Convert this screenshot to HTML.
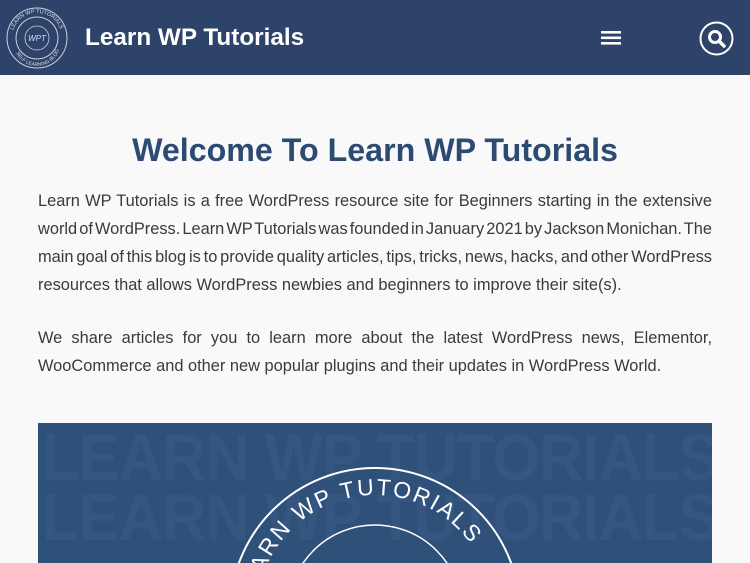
<!DOCTYPE html>
<html><head><meta charset="utf-8"><style>
*{margin:0;padding:0;box-sizing:border-box}
body{width:750px;height:563px;overflow:hidden;background:#f9f9f9;font-family:"Liberation Sans",sans-serif}
.hdr{position:absolute;left:0;top:0;width:750px;height:75px;background:#2e4369}
.title{position:absolute;left:85px;top:24px;color:#fff;font-size:24.3px;font-weight:bold}
h1{position:absolute;left:0;width:750px;top:132px;text-align:center;color:#2c4a72;font-size:32.2px;font-weight:bold}
.p{position:absolute;left:38px;width:674px;color:#3a3a3a;font-size:16.4px;line-height:28px}
.p div{text-align:justify;text-align-last:justify;white-space:nowrap}
.p div.l{text-align-last:left}
.img{position:absolute;left:38px;top:423px;width:674px;height:140px;background:#2f5078;overflow:hidden}
.bg{position:absolute;left:4px;color:#345680;font-size:66px;font-weight:bold;letter-spacing:-1px;white-space:nowrap;transform:scaleX(0.93);transform-origin:left}
</style></head><body>
<div class="hdr">
<svg style="position:absolute;left:6px;top:7px" width="62" height="62" viewBox="0 0 62 62">
<circle cx="31" cy="31" r="30" fill="none" stroke="#c9d1de" stroke-width="1"/>
<circle cx="31" cy="31" r="21" fill="none" stroke="#c9d1de" stroke-width="1"/>
<circle cx="31" cy="31" r="12" fill="none" stroke="#c9d1de" stroke-width="0.8"/>
<text x="31" y="34" fill="#dde" font-size="8" text-anchor="middle" font-style="italic">WPT</text>
<path id="arc" d="M6 31 A25 25 0 0 1 56 31" fill="none"/>
<text font-size="5.5" fill="#dde"><textPath href="#arc" startOffset="8">LEARN WP TUTORIALS</textPath></text>
<path id="arc2" d="M8 36 A23 23 0 0 0 54 36" fill="none"/>
<text font-size="5" fill="#dde"><textPath href="#arc2" startOffset="10">SELF LEARNING BLOG</textPath></text>
</svg>
<div class="title">Learn WP Tutorials</div>
<svg style="position:absolute;left:601px;top:31px" width="20" height="14"><rect y="0" width="20" height="2.6" fill="#fff"/><rect y="5.5" width="20" height="2.6" fill="#fff"/><rect y="11" width="20" height="2.6" fill="#fff"/></svg>
<svg style="position:absolute;left:699px;top:21px" width="35" height="35" viewBox="0 0 35 35"><circle cx="17.5" cy="17.5" r="16" fill="none" stroke="#fff" stroke-width="2"/><circle cx="16" cy="16" r="5.5" fill="none" stroke="#fff" stroke-width="3"/><line x1="20" y1="20" x2="25" y2="25" stroke="#fff" stroke-width="3.5" stroke-linecap="round"/></svg>
</div>
<h1>Welcome To Learn WP Tutorials</h1>
<div class="p" style="top:187px">
<div>Learn WP Tutorials is a free WordPress resource site for Beginners starting in the extensive</div>
<div style="word-spacing:-2.8px">world of WordPress. Learn WP Tutorials was founded in January 2021 by Jackson Monichan. The</div>
<div style="word-spacing:-2px">main goal of this blog is to provide quality articles, tips, tricks, news, hacks, and other WordPress</div>
<div class="l">resources that allows WordPress newbies and beginners to improve their site(s).</div>
</div>
<div class="p" style="top:324px">
<div>We share articles for you to learn more about the latest WordPress news, Elementor,</div>
<div class="l">WooCommerce and other new popular plugins and their updates in WordPress World.</div>
</div>
<div class="img">
<div class="bg" style="top:-4px">LEARN WP TUTORIALS</div>
<div class="bg" style="top:56px">LEARN WP TUTORIALS</div>
<svg style="position:absolute;left:0;top:0" width="674" height="140">
<circle cx="337" cy="190" r="145" fill="none" stroke="#fff" stroke-width="2"/>
<circle cx="337" cy="189" r="87" fill="none" stroke="#fff" stroke-width="1.5"/>
<path id="a2" d="M219 190 A118 118 0 0 1 455 190" fill="none"/>
<text font-size="23" fill="#fff" letter-spacing="2"><textPath href="#a2" startOffset="8">LEARN WP TUTORIALS</textPath></text>
</svg>
</div>
</body></html>
